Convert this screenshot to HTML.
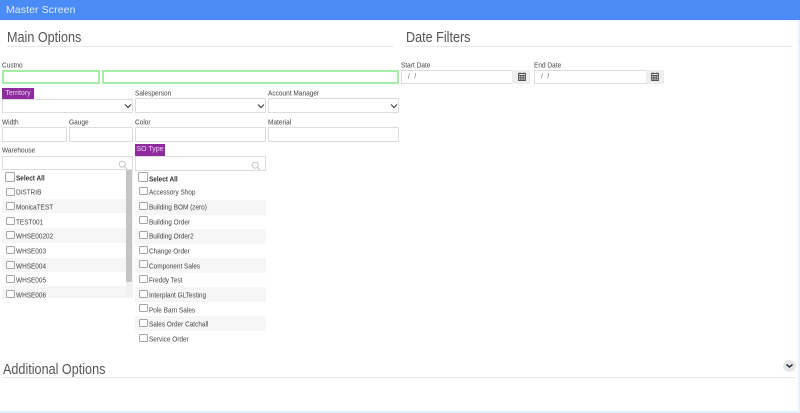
<!DOCTYPE html>
<html><head><meta charset="utf-8"><style>
html,body{margin:0;padding:0;background:#fff}
body{width:800px;height:413px;overflow:hidden;position:relative;font-family:"Liberation Sans",sans-serif;color:#444}
#w{position:absolute;left:0;top:0;width:800px;height:413px;filter:blur(.3px)}
#w div{position:absolute;box-sizing:border-box}
.l{font-size:7.6px;line-height:10px;color:#444;white-space:nowrap;transform:scaleX(.86) translateY(.7px);transform-origin:left top}
.h{font-size:14.5px;line-height:18px;color:#555;white-space:nowrap;transform:scaleX(.87);transform-origin:left top}
.hr{height:1px;background:#e9e9e9}
.i{border:1px solid #ddd;background:#fff}
.g{border:2px solid #a6eea6;background:#fff}
.b{background:#8f2b9f;color:#e9d6ee;font-size:7px;line-height:10px;padding-top:1px;text-align:center}
.st{background:#f6f6f6;height:14.6px}
.c{width:9px;height:8px;border:1px solid #a5a5a5;border-radius:1.5px;background:#fff}
.t{font-size:7.4px;line-height:10px;color:#444;white-space:nowrap;transform:scaleX(.87) translateY(.6px);transform-origin:left top}
.add{background:#eee}
svg{position:absolute}
</style></head><body><div id="w">
<div style="left:0;top:0;width:800px;height:20px;background:#4a8bf5"></div>
<div style="left:6px;top:3.500px;font-size:10.4px;line-height:13px;color:#e4eefd;letter-spacing:.15px;white-space:nowrap">Master Screen</div>

<div class="h" style="left:7px;top:29px">Main Options</div><div class="hr" style="left:7px;top:46px;width:387px"></div>
<div class="h" style="left:406px;top:29px">Date Filters</div><div class="hr" style="left:406px;top:46px;width:387px"></div>

<div class="l" style="left:2px;top:60px">Custno</div>
<div class="g" style="left:2px;top:70px;width:98px;height:14px"></div>
<div class="g" style="left:102px;top:70px;width:297px;height:14px"></div>

<div class="l" style="left:401px;top:60px">Start Date</div>
<div class="i" style="left:401px;top:70px;width:112px;height:14px"></div>
<div class="add" style="left:512px;top:70px;width:18px;height:14px"></div>
<div class="t" style="left:408px;top:71px;color:#666;letter-spacing:1.6px">/ /</div>
<div class="l" style="left:534px;top:60px">End Date</div>
<div class="i" style="left:534px;top:70px;width:113px;height:14px"></div>
<div class="add" style="left:646px;top:70px;width:18px;height:14px"></div>
<div class="t" style="left:541px;top:71px;color:#666;letter-spacing:1.6px">/ /</div>
<svg style="left:518px;top:72px" width="8" height="9" viewBox="0 0 8 9"><path d="M.5 1.5h7v7h-7zM.5 3.5h7M2 .3v2M6 .3v2M.5 5.2h7M.5 6.9h7M2.8 3.5v5M5.2 3.5v5" fill="none" stroke="#555" stroke-width=".9"/></svg>
<svg style="left:651px;top:72px" width="8" height="9" viewBox="0 0 8 9"><path d="M.5 1.5h7v7h-7zM.5 3.5h7M2 .3v2M6 .3v2M.5 5.2h7M.5 6.9h7M2.8 3.5v5M5.2 3.5v5" fill="none" stroke="#555" stroke-width=".9"/></svg>

<div class="b" style="left:2px;top:88px;width:32px;height:11px">Territory</div>
<div class="i" style="left:2px;top:99px;width:131px;height:14px"></div>
<svg style="left:124px;top:103px" width="8" height="6" viewBox="0 0 8 6"><path d="M1 1.5l3 3 3-3" fill="none" stroke="#444" stroke-width="1.2"/></svg>
<div class="l" style="left:135px;top:88px">Salesperson</div>
<div class="i" style="left:135px;top:98px;width:131px;height:15px"></div>
<svg style="left:257px;top:103px" width="8" height="6" viewBox="0 0 8 6"><path d="M1 1.5l3 3 3-3" fill="none" stroke="#444" stroke-width="1.2"/></svg>
<div class="l" style="left:268px;top:88px">Account Manager</div>
<div class="i" style="left:268px;top:98px;width:131px;height:15px"></div>
<svg style="left:390px;top:103px" width="8" height="6" viewBox="0 0 8 6"><path d="M1 1.5l3 3 3-3" fill="none" stroke="#444" stroke-width="1.2"/></svg>

<div class="l" style="left:2px;top:117px">Width</div>
<div class="i" style="left:2px;top:127px;width:65px;height:15px"></div>
<div class="l" style="left:69px;top:117px">Gauge</div>
<div class="i" style="left:69px;top:127px;width:64px;height:15px"></div>
<div class="l" style="left:135px;top:117px">Color</div>
<div class="i" style="left:135px;top:127px;width:131px;height:15px"></div>
<div class="l" style="left:268px;top:117px">Material</div>
<div class="i" style="left:268px;top:127px;width:131px;height:15px"></div>

<div class="l" style="left:2px;top:145px">Warehouse</div>
<div class="i" style="left:2px;top:156px;width:131px;height:14px"></div>
<svg style="left:118px;top:160px" width="10" height="10" viewBox="0 0 10 10"><circle cx="4.2" cy="4.2" r="3" fill="none" stroke="#c4c4c4"/><path d="M6.5 6.5l2.5 2.5" stroke="#c4c4c4"/></svg>
<div class="b" style="left:135px;top:144px;width:30px;height:12px">SO Type</div>
<div class="i" style="left:135px;top:156px;width:131px;height:15px"></div>
<svg style="left:251px;top:161px" width="10" height="10" viewBox="0 0 10 10"><circle cx="4.2" cy="4.2" r="3" fill="none" stroke="#c4c4c4"/><path d="M6.5 6.5l2.5 2.5" stroke="#c4c4c4"/></svg>

<!-- warehouse list -->
<div class="st" style="left:2px;top:198.500px;width:124px"></div>
<div class="st" style="left:2px;top:228px;width:124px"></div>
<div class="st" style="left:2px;top:257.500px;width:124px"></div>
<div class="st" style="left:2px;top:286px;width:124px;height:11.500px"></div>
<div style="left:126px;top:170px;width:7px;height:128px;background:#f1f1f1"></div>
<div style="left:126px;top:170px;width:6px;height:112px;background:#c4c4c4"></div>
<div class="c" style="left:5px;top:172px;width:10px;height:10px"></div><div class="t" style="left:16px;top:173px;font-weight:bold;color:#333">Select All</div>
<div class="c" style="left:6px;top:188px"></div><div class="t" style="left:16px;top:187px">DISTRIB</div>
<div class="c" style="left:6px;top:202px"></div><div class="t" style="left:16px;top:202px">MonicaTEST</div>
<div class="c" style="left:6px;top:217px"></div><div class="t" style="left:16px;top:216.500px">TEST001</div>
<div class="c" style="left:6px;top:231px"></div><div class="t" style="left:16px;top:231px">WHSE00202</div>
<div class="c" style="left:6px;top:246px"></div><div class="t" style="left:16px;top:246px">WHSE003</div>
<div class="c" style="left:6px;top:261px"></div><div class="t" style="left:16px;top:260.500px">WHSE004</div>
<div class="c" style="left:6px;top:275px"></div><div class="t" style="left:16px;top:275px">WHSE005</div>
<div class="c" style="left:6px;top:290px"></div><div class="t" style="left:16px;top:289.500px">WHSE006</div>

<!-- so type list -->
<div class="st" style="left:135px;top:200px;width:131px"></div>
<div class="st" style="left:135px;top:229px;width:131px"></div>
<div class="st" style="left:135px;top:258px;width:131px"></div>
<div class="st" style="left:135px;top:287px;width:131px"></div>
<div class="st" style="left:135px;top:316px;width:131px"></div>
<div class="c" style="left:138px;top:172px;width:10px;height:10px"></div><div class="t" style="left:149px;top:174px;font-weight:bold;color:#333">Select All</div>
<div class="c" style="left:139px;top:187px"></div><div class="t" style="left:149px;top:187px">Accessory Shop</div>
<div class="c" style="left:139px;top:202px"></div><div class="t" style="left:149px;top:202px">Building BOM (zero)</div>
<div class="c" style="left:139px;top:216px"></div><div class="t" style="left:149px;top:216.500px">Building Order</div>
<div class="c" style="left:139px;top:231px"></div><div class="t" style="left:149px;top:231px">Building Order2</div>
<div class="c" style="left:139px;top:246px"></div><div class="t" style="left:149px;top:246px">Change Order</div>
<div class="c" style="left:139px;top:260px"></div><div class="t" style="left:149px;top:260.500px">Component Sales</div>
<div class="c" style="left:139px;top:275px"></div><div class="t" style="left:149px;top:275px">Freddy Test</div>
<div class="c" style="left:139px;top:290px"></div><div class="t" style="left:149px;top:290px">Interplant GLTesting</div>
<div class="c" style="left:139px;top:304px"></div><div class="t" style="left:149px;top:304.500px">Pole Barn Sales</div>
<div class="c" style="left:139px;top:319px"></div><div class="t" style="left:149px;top:319px">Sales Order Catchall</div>
<div class="c" style="left:139px;top:334px"></div><div class="t" style="left:149px;top:334px">Service Order</div>

<div class="h" style="left:3px;top:360.500px">Additional Options</div><div class="hr" style="left:3px;top:377px;width:793px"></div>
<div style="left:783px;top:360px;width:13px;height:12px;border-radius:50%;background:#e6e6e6"></div>
<svg style="left:785px;top:362px" width="9" height="8" viewBox="0 0 9 8"><path d="M1.500 2.500l3 2.500 3-2.500" fill="none" stroke="#26323f" stroke-width="1.500"/></svg>

<div style="left:0;top:411px;width:800px;height:2px;background:#e3eefd"></div>
<div style="left:798px;top:20px;width:2px;height:393px;background:#e8f0fd"></div>
</div></body></html>
